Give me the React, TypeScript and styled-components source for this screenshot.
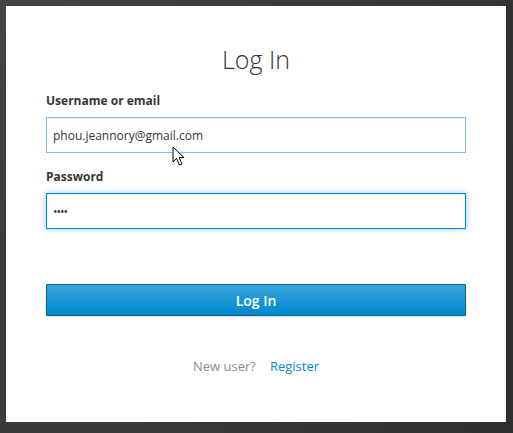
import React from "react";
import styled, { createGlobalStyle } from "styled-components";

const Global = createGlobalStyle`
  html, body { margin: 0; padding: 0; }
  body {
    width: 513px;
    height: 433px;
    overflow: hidden;
    font-family: "Open Sans", "Noto Sans", sans-serif;
    background:
      linear-gradient(160deg, rgba(255,255,255,0.04) 0%, rgba(255,255,255,0) 40%),
      linear-gradient(100deg, #3d3d3d 0%, #383838 45%, #2f2f2f 100%);
  }
`;

const Page = styled.div`
  padding: 6px;
  box-sizing: border-box;
  width: 513px;
  height: 433px;
`;

const Card = styled.div`
  position: relative;
  width: 500px;
  height: 416px;
  background: #fff;
  box-sizing: border-box;
  padding: 36px 40px 0;
  display: flex;
  flex-direction: column;
`;

const Title = styled.h1`
  margin: 0;
  font-family: "Open Sans", sans-serif;
  font-weight: 300;
  font-size: 25px;
  line-height: 34px;
  color: #363636;
  text-align: center;
`;

const Form = styled.form`
  margin-top: 17px;
  display: flex;
  flex-direction: column;
`;

const Label = styled.label`
  display: block;
  font-size: 12px;
  font-weight: 700;
  color: #363636;
  line-height: 16px;
  margin-bottom: 8px;
`;

const Field = styled.div<{ $gap: number }>`
  margin-bottom: ${(p) => p.$gap}px;
`;

const Input = styled.input<{ $focused?: boolean }>`
  display: block;
  width: 100%;
  height: 36px;
  box-sizing: border-box;
  padding: 0 6px;
  font-family: "Open Sans", sans-serif;
  font-size: 12px;
  color: #363636;
  background: #fff;
  outline: none;
  border: 1px solid ${(p) => (p.$focused ? "#0088ce" : "#7dc3e8")};
  box-shadow: ${(p) =>
    p.$focused
      ? "inset 0 1px 1px rgba(3,3,3,0.075), 0 0 6px rgba(0,136,206,0.45)"
      : "inset 0 1px 1px rgba(3,3,3,0.075)"};
  letter-spacing: ${(p) => (p.$focused ? "-1px" : "0")};
`;

const Button = styled.button`
  margin-top: 55px;
  width: 100%;
  height: 32px;
  border: 1px solid #00659c;
  border-radius: 1px;
  background: linear-gradient(to bottom, #39a5dc 0%, #0088ce 100%);
  color: #fff;
  font-family: "Open Sans", sans-serif;
  font-size: 14px;
  font-weight: 600;
  box-shadow: 0 1px 2px rgba(3,3,3,0.15);
  cursor: pointer;
`;

const Footer = styled.div`
  margin-top: 41px;
  display: flex;
  justify-content: center;
  gap: 14px;
  font-size: 13px;
  line-height: 18px;
`;

const Muted = styled.span`
  color: #8b8d8f;
`;

const Link = styled.a`
  color: #0088ce;
  text-decoration: none;
`;

const Cursor = styled.svg`
  position: absolute;
  left: 166px;
  top: 140px;
  pointer-events: none;
`;

export default function App() {
  return (
    <>
      <Global />
      <Page>
        <Card>
          <Title>Log In</Title>
          <Form onSubmit={(e) => e.preventDefault()}>
            <Field $gap={16}>
              <Label htmlFor="username">Username or email</Label>
              <Input id="username" defaultValue="phou.jeannory@gmail.com" />
            </Field>
            <Field $gap={0}>
              <Label htmlFor="password">Password</Label>
              <Input id="password" type="password" defaultValue="abcd" $focused />
            </Field>
            <Button type="submit">Log In</Button>
          </Form>
          <Footer>
            <Muted>New user?</Muted>
            <Link href="#">Register</Link>
          </Footer>
          <Cursor width="14" height="21" viewBox="0 0 14 21">
            <path
              d="M1 1 L1 16 L4.5 12.5 L7.5 19 L10 18 L7 11.5 L12 11.5 Z"
              fill="#fff"
              stroke="#000"
              strokeWidth="1"
              strokeLinejoin="round"
            />
          </Cursor>
        </Card>
      </Page>
    </>
  );
}
